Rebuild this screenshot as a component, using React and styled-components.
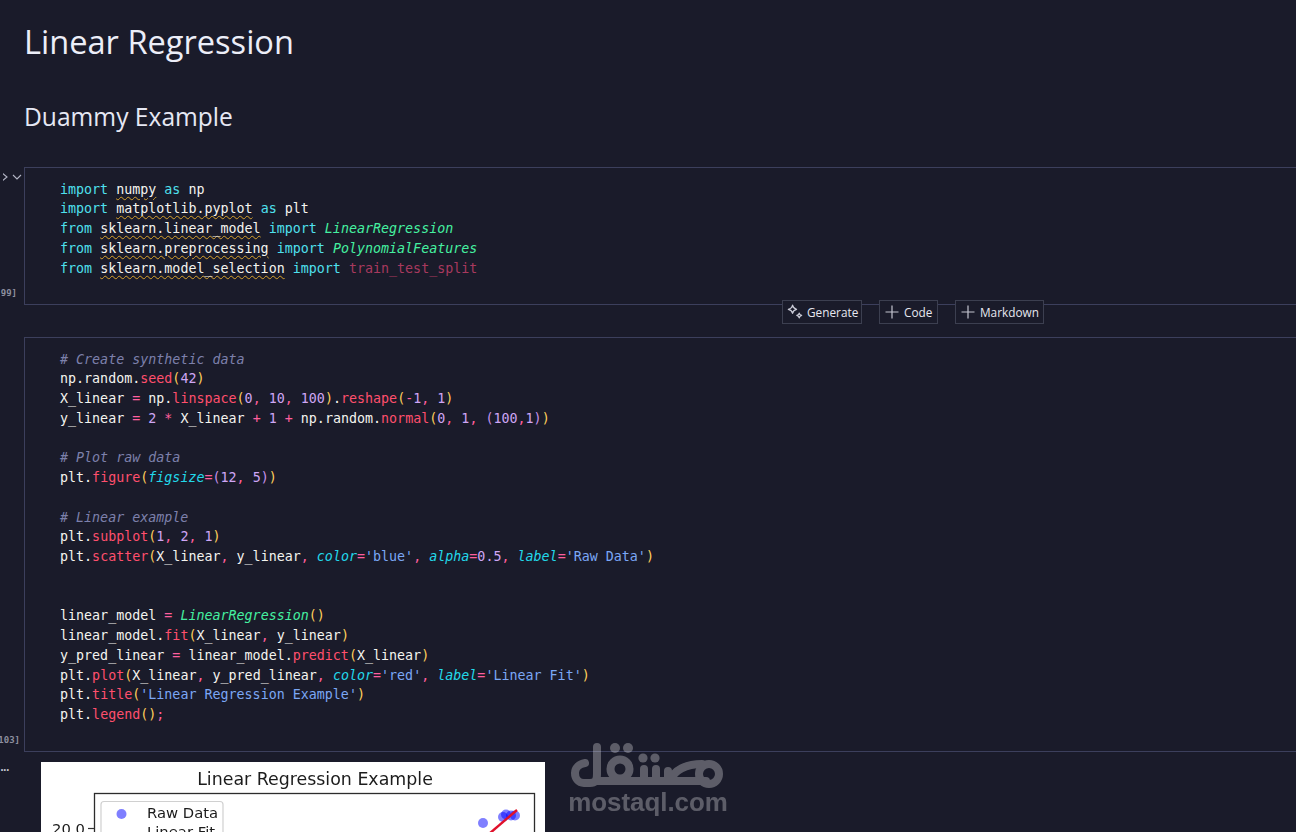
import React from "react";
import styled, { createGlobalStyle } from "styled-components";

const Global = createGlobalStyle`
  html, body { margin: 0; padding: 0; height: 832px; overflow: hidden; background: #1a1b2a; }
  #root { height: 832px; overflow: hidden; }
`;

const Page = styled.main`
  position: relative;
  width: 1296px;
  height: 832px;
  overflow: hidden;
  background: #1a1b2a;
  display: flex;
  flex-direction: column;
  font-family: "Open Sans", "Noto Sans", sans-serif;
`;

const Markdown = styled.section`
  height: 167px;
  padding-left: 24px;
  box-sizing: border-box;
  flex: none;
`;

const Title = styled.h1`
  margin: 0;
  padding-top: 20px;
  font-size: 32.6px;
  line-height: 44px;
  font-weight: 400;
  color: #eceef8;
`;

const Subtitle = styled.h2`
  margin: 0;
  padding-top: 36px;
  font-size: 24.6px;
  line-height: 34px;
  font-weight: 400;
  color: #e6e8f4;
`;

const CellRow = styled.div`
  display: flex;
  flex: none;
  width: 1310px;
`;

const Gutter = styled.div`
  width: 24px;
  flex: none;
  display: flex;
  flex-direction: column;
  justify-content: space-between;
  align-items: flex-end;
  overflow: hidden;
`;

const Toggles = styled.div`
  display: flex;
  align-items: center;
  gap: 3px;
  height: 20px;
  padding-right: 2px;
  color: #b4b6c6;
`;

const Count = styled.div`
  font-family: "DejaVu Sans Mono", monospace;
  font-size: 9px;
  line-height: 12px;
  font-weight: 700;
  color: #8d8f9f;
  padding: 0 ${(p) => p.$right}px 6px 0;
  white-space: nowrap;
`;

const Cell = styled.div`
  flex: 1;
  box-sizing: border-box;
  border: 1px solid #3c3f5c;
  padding: 11.7px 0 ${(p) => p.$bottom}px 35px;
  font-family: "DejaVu Sans Mono", monospace;
  font-size: 13.33px;
  line-height: 19.75px;
  color: #f4f4ef;
`;

const Line = styled.div`
  white-space: pre;
  height: 19.75px;
`;

const Kw = styled.span`color: #4fe0ee;`;
const Cls = styled.span`color: #45f0a0; font-style: italic;`;
const Fn = styled.span`color: #ff4f6d;`;
const Op = styled.span`color: #ff5f9e;`;
const Num = styled.span`color: #cfa6f5;`;
const Str = styled.span`color: #7ba7f5;`;
const Comment = styled.span`color: #7d80ab; font-style: italic;`;
const Param = styled.span`color: #22d8ea; font-style: italic;`;
const Gold = styled.span`color: #ffcf5c;`;
const Violet = styled.span`color: #c792ea;`;
const Dim = styled.span`color: #a8395e;`;
const Unresolved = styled.span`
  text-decoration: underline wavy #d8a22e 1px;
  text-underline-offset: 2px;
`;

const InsertBar = styled.div`
  position: relative;
  display: flex;
  gap: 17px;
  flex: none;
  height: 24px;
  margin: -5px 0 13px 782px;
`;

const InsertButton = styled.button`
  box-sizing: border-box;
  width: ${(p) => p.$width}px;
  height: 24px;
  padding: 0 0 0 4px;
  display: flex;
  align-items: center;
  gap: 4px;
  background: #1a1b2a;
  border: 1px solid #3c3f50;
  color: #e6e7f0;
  font-family: "Open Sans", "Noto Sans", sans-serif;
  font-size: 11.8px;
  white-space: nowrap;
`;

const Output = styled.div`
  display: flex;
  flex: none;
  padding-top: 10px;
`;

const OutputGutter = styled.div`
  width: 17px;
  flex: none;
  height: 16px;
  overflow: hidden;
  color: #c4c6d2;
  font-family: "DejaVu Sans Mono", monospace;
  font-size: 10px;
  font-weight: 700;
  line-height: 11px;
  letter-spacing: -3.2px;
  text-indent: -1px;
`;

const Plot = styled.div`
  margin-left: 24px;
  width: 504px;
  height: 200px;
  flex: none;
  background: #fff;
`;

const PlotSvg = styled.svg`
  display: block;
  filter: blur(0.35px);
  font-family: "DejaVu Sans", sans-serif;
`;

const Watermark = styled.div`
  position: absolute;
  left: 566px;
  top: 740px;
  width: 164px;
  opacity: 0.29;
  color: #fff;
  text-align: center;
  pointer-events: none;
`;

const WatermarkText = styled.div`
  font-family: "Liberation Sans", Arial, sans-serif;
  font-weight: 700;
  font-size: 25.9px;
  line-height: 26px;
  margin-top: -7px;
  white-space: nowrap;
`;

const LogoSvg = styled.svg`
  display: block;
`;

const Sparkle = () => (
  <svg width="16" height="16" viewBox="1 1 14.4 14.4" fill="none" stroke="#c9cad6" strokeWidth="1.1" strokeLinejoin="round">
    <path d="M6 2 C6.4 4.2 7.6 5.3 9.6 5.8 C7.6 6.3 6.4 7.4 6 9.4 C5.6 7.4 4.4 6.3 2.2 5.8 C4.4 5.3 5.6 4.2 6 2 Z" />
    <path d="M12 9.2 C12.2 10.4 12.9 11 14.2 11.3 C12.9 11.6 12.2 12.3 12 13.6 C11.8 12.3 11.1 11.6 9.8 11.3 C11.1 11 11.8 10.4 12 9.2 Z" />
  </svg>
);

const Plus = () => (
  <svg width="16" height="16" viewBox="0 0 16 16" fill="none" stroke="#c4c5d0" strokeWidth="1.2">
    <path d="M8 1.5 V14.5 M1.5 8 H14.5" />
  </svg>
);

const Toggle = ({ d, width }) => (
  <svg width={width} height="10" viewBox={`0 0 ${width} 10`} fill="none" stroke="currentColor" strokeWidth="1.1">
    <path d={d} />
  </svg>
);

const Logo = () => (
  <LogoSvg width="164" height="56" viewBox="0 0 164 56" fill="none" stroke="#fff" strokeWidth="8" strokeLinecap="round" strokeLinejoin="round">
    <path d="M31 7 V34 C31 41 29 43 24 43 H18 C12 43 9 38 9 33 C9 28 13 24 19 23" />
    <path d="M31 41 H140" />
    <circle cx="54" cy="29" r="9.5" />
    <path d="M78 41 V29 M90 41 V29 M102 41 V31" />
    <path d="M104 41 C108 30 120 24 136 24" />
    <circle cx="143" cy="34" r="10" />
    <g fill="#fff" stroke="none">
      <circle cx="49" cy="8" r="5" />
      <circle cx="62" cy="8" r="5" />
      <circle cx="77" cy="18" r="4.6" />
      <circle cx="89" cy="18" r="4.6" />
    </g>
  </LogoSvg>
);

const ChartImage = () => (
  <Plot>
    <PlotSvg width="504" height="200" viewBox="0 0 504 200">
      <text x="274" y="23" textAnchor="middle" fontSize="17.4" fill="#1c1c1c">Linear Regression Example</text>
      <rect x="53.5" y="31.5" width="440" height="170" fill="none" stroke="#2c2c2c" strokeWidth="1.3" />
      <path d="M47 66.5 H53" stroke="#333" strokeWidth="1.2" />
      <text x="44" y="72" textAnchor="end" fontSize="14.8" fill="#1c1c1c">20.0</text>
      <rect x="60" y="39.5" width="122" height="80" rx="3" fill="#fff" stroke="#d0d0d0" strokeWidth="1.2" />
      <circle cx="80.5" cy="52" r="5" fill="#0000ff" fillOpacity="0.5" />
      <text x="106" y="56" fontSize="14.8" fill="#1c1c1c">Raw Data</text>
      <text x="106" y="75" fontSize="14.8" fill="#1c1c1c">Linear Fit</text>
      <g fill="#0000ff" fillOpacity="0.5">
        <circle cx="442" cy="61" r="5" />
        <circle cx="462" cy="55" r="5" />
        <circle cx="465" cy="52.5" r="5" />
        <circle cx="470" cy="53.5" r="5" />
        <circle cx="474" cy="53.5" r="5" />
      </g>
      <path d="M448 72 L476 48" stroke="#e0102a" strokeWidth="2.4" />
    </PlotSvg>
  </Plot>
);

const Tick = ({ children }) => <Unresolved>{children}</Unresolved>;

export default function App() {
  return (
    <Page>
      <Global />
      <Markdown>
        <Title>Linear Regression</Title>
        <Subtitle>Duammy Example</Subtitle>
      </Markdown>

      <CellRow>
        <Gutter>
          <Toggles>
            <Toggle width={6} d="M-1 1 L4 5 L-1 9" />
            <Toggle width={10} d="M1 3 L5 7 L9 3" />
          </Toggles>
          <Count $right={7}>[99]</Count>
        </Gutter>
        <Cell $bottom={25.55}>
          <Line><Kw>import</Kw> <Tick>numpy</Tick> <Kw>as</Kw> np</Line>
          <Line><Kw>import</Kw> <Tick>matplotlib.pyplot</Tick> <Kw>as</Kw> plt</Line>
          <Line><Kw>from</Kw> <Tick>sklearn.linear_model</Tick> <Kw>import</Kw> <Cls>LinearRegression</Cls></Line>
          <Line><Kw>from</Kw> <Tick>sklearn.preprocessing</Tick> <Kw>import</Kw> <Cls>PolynomialFeatures</Cls></Line>
          <Line><Kw>from</Kw> <Tick>sklearn.model_selection</Tick> <Kw>import</Kw> <Dim>train_test_split</Dim></Line>
        </Cell>
      </CellRow>

      <InsertBar>
        <InsertButton $width={80}><Sparkle />Generate</InsertButton>
        <InsertButton $width={59}><Plus />Code</InsertButton>
        <InsertButton $width={89}><Plus />Markdown</InsertButton>
      </InsertBar>

      <CellRow>
        <Gutter>
          <Toggles />
          <Count $right={4}>[103]</Count>
        </Gutter>
        <Cell $bottom={26.05}>
          <Line><Comment># Create synthetic data</Comment></Line>
          <Line>np.random.<Fn>seed</Fn><Gold>(</Gold><Num>42</Num><Gold>)</Gold></Line>
          <Line>X_linear <Op>=</Op> np.<Fn>linspace</Fn><Gold>(</Gold><Num>0</Num><Op>,</Op> <Num>10</Num><Op>,</Op> <Num>100</Num><Gold>)</Gold>.<Fn>reshape</Fn><Gold>(</Gold><Op>-</Op><Num>1</Num><Op>,</Op> <Num>1</Num><Gold>)</Gold></Line>
          <Line>y_linear <Op>=</Op> <Num>2</Num> <Op>*</Op> X_linear <Op>+</Op> <Num>1</Num> <Op>+</Op> np.random.<Fn>normal</Fn><Gold>(</Gold><Num>0</Num><Op>,</Op> <Num>1</Num><Op>,</Op> <Violet>(</Violet><Num>100</Num><Op>,</Op><Num>1</Num><Violet>)</Violet><Gold>)</Gold></Line>
          <Line />
          <Line><Comment># Plot raw data</Comment></Line>
          <Line>plt.<Fn>figure</Fn><Gold>(</Gold><Param>figsize</Param><Op>=</Op><Violet>(</Violet><Num>12</Num><Op>,</Op> <Num>5</Num><Violet>)</Violet><Gold>)</Gold></Line>
          <Line />
          <Line><Comment># Linear example</Comment></Line>
          <Line>plt.<Fn>subplot</Fn><Gold>(</Gold><Num>1</Num><Op>,</Op> <Num>2</Num><Op>,</Op> <Num>1</Num><Gold>)</Gold></Line>
          <Line>plt.<Fn>scatter</Fn><Gold>(</Gold>X_linear<Op>,</Op> y_linear<Op>,</Op> <Param>color</Param><Op>=</Op><Str>'blue'</Str><Op>,</Op> <Param>alpha</Param><Op>=</Op><Num>0.5</Num><Op>,</Op> <Param>label</Param><Op>=</Op><Str>'Raw Data'</Str><Gold>)</Gold></Line>
          <Line />
          <Line />
          <Line>linear_model <Op>=</Op> <Cls>LinearRegression</Cls><Gold>()</Gold></Line>
          <Line>linear_model.<Fn>fit</Fn><Gold>(</Gold>X_linear<Op>,</Op> y_linear<Gold>)</Gold></Line>
          <Line>y_pred_linear <Op>=</Op> linear_model.<Fn>predict</Fn><Gold>(</Gold>X_linear<Gold>)</Gold></Line>
          <Line>plt.<Fn>plot</Fn><Gold>(</Gold>X_linear<Op>,</Op> y_pred_linear<Op>,</Op> <Param>color</Param><Op>=</Op><Str>'red'</Str><Op>,</Op> <Param>label</Param><Op>=</Op><Str>'Linear Fit'</Str><Gold>)</Gold></Line>
          <Line>plt.<Fn>title</Fn><Gold>(</Gold><Str>'Linear Regression Example'</Str><Gold>)</Gold></Line>
          <Line>plt.<Fn>legend</Fn><Gold>()</Gold><Op>;</Op></Line>
        </Cell>
      </CellRow>

      <Output>
        <OutputGutter>...</OutputGutter>
        <ChartImage />
      </Output>

      <Watermark>
        <Logo />
        <WatermarkText>mostaql.com</WatermarkText>
      </Watermark>
    </Page>
  );
}
